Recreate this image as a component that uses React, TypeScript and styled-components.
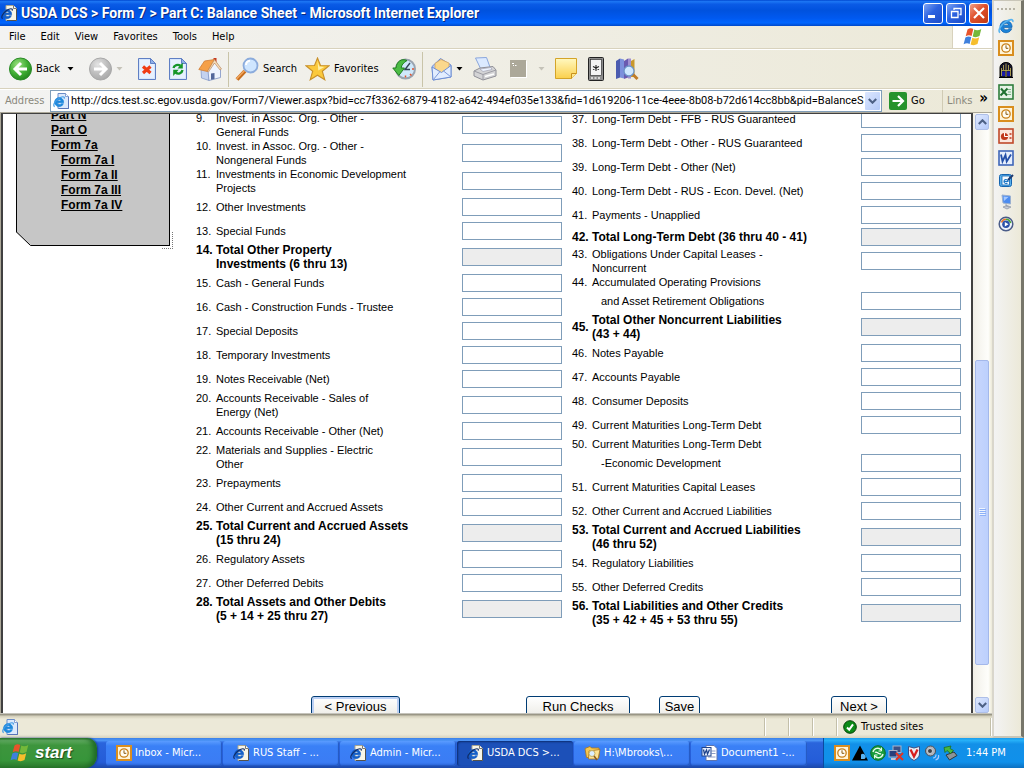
import React from "react";
import styled, { createGlobalStyle, css } from "styled-components";

const UI = `"DejaVu Sans Condensed", "DejaVu Sans", sans-serif`;
const DOC = `"Liberation Sans", Arial, sans-serif`;

const Global = createGlobalStyle`
  *, *::before, *::after { box-sizing: border-box; }
  body { margin: 0; background: #ece9d8; font: 11px/14px ${UI}; color: #000; overflow: hidden; }
  button { border: 0; padding: 0; margin: 0; background: none; font: inherit; color: inherit; }
  input { font: inherit; margin: 0; }
  svg { display: block; flex: none; }
`;

/* ---------- shell ---------- */

const Desktop = styled.div`
  display: flex;
  flex-direction: column;
  height: 100vh;
`;
const Workspace = styled.div`
  flex: 1;
  min-height: 0;
  display: flex;
`;
const Browser = styled.main`
  flex: 1;
  min-width: 0;
  display: flex;
  flex-direction: column;
`;
const TitleBar = styled.header`
  height: 26px;
  flex: none;
  display: flex;
  align-items: center;
  gap: 3px;
  padding: 0 3px 0 1px;
  color: #fff;
  background: linear-gradient(#0047d0 0%, #1c76f4 6%, #0a5be6 16%, #0052de 40%, #0059f0 70%, #0066ff 88%, #0048c8 100%);
`;
const Title = styled.h1`
  flex: 1;
  margin: 0;
  font: bold 14px/18px Roboto, sans-serif;
  white-space: nowrap;
  text-shadow: 1px 1px 0 #0a2a80;
`;
const WinButton = styled.button<{ $close?: boolean }>`
  width: 20px;
  height: 21px;
  border: 1px solid #fff;
  border-radius: 3px;
  display: grid;
  place-items: center;
  background: ${(p) =>
    p.$close
      ? "linear-gradient(135deg, #f0a088, #e0502c 45%, #c03a14)"
      : "linear-gradient(135deg, #7ea4f4, #2c62e0 45%, #1c4cc8)"};
`;

const MenuBar = styled.nav`
  height: 23px;
  flex: none;
  display: flex;
  align-items: stretch;
  padding-left: 1px;
  background: linear-gradient(90deg, #f3f3f2, #ece9d8);
  border-bottom: 1px solid #d8d2bd;
`;
const MenuItem = styled.button`
  padding: 0 7px 0 8px;
`;
const FlagBox = styled.div`
  margin-left: auto;
  width: 40px;
  display: grid;
  place-items: center;
  background: #fff;
  border-left: 1px solid #d8d2bd;
`;

const ToolBar = styled.div`
  height: 40px;
  flex: none;
  display: flex;
  align-items: center;
  gap: 10px;
  padding-left: 8px;
  background: linear-gradient(90deg, #f3f3f2, #ece9d8);
  border-top: 1px solid #fff;
  border-bottom: 1px solid #d8d2bd;
`;
const ToolButton = styled.button<{ $width: number; $end?: boolean }>`
  width: ${(p) => p.$width}px;
  height: 32px;
  display: flex;
  align-items: center;
  justify-content: ${(p) => (p.$end ? "flex-end" : "flex-start")};
  gap: 4px;
  white-space: nowrap;
`;
const ToolSeparator = styled.span`
  width: 1px;
  height: 35px;
  margin: 0 -4px;
  background: #c9c4a9;
`;

const AddressBar = styled.form`
  height: 23px;
  flex: none;
  display: flex;
  align-items: center;
  background: linear-gradient(90deg, #f3f3f2, #ece9d8);
  border-top: 1px solid #fff;
`;
const AddressLabel = styled.label`
  width: 50px;
  padding-left: 5px;
  color: #8a887c;
`;
const UrlBox = styled.div`
  flex: 1;
  min-width: 0;
  height: 22px;
  display: flex;
  align-items: center;
  gap: 1px;
  padding: 0 1px 0 2px;
  background: #fff;
  border: 1px solid #7f9db9;
`;
const UrlInput = styled.input`
  flex: 1;
  min-width: 0;
  border: 0;
  padding: 0;
  background: transparent;
  outline: 0;
  font: 11px/16px Roboto, sans-serif;
`;
const DropButton = styled.button`
  width: 15px;
  height: 18px;
  display: grid;
  place-items: center;
  border-radius: 1px;
  background: linear-gradient(135deg, #dbe6fe, #b4caf8);
`;
const GoButton = styled.button`
  width: 60px;
  padding-left: 7px;
  display: flex;
  align-items: center;
  gap: 4px;
`;
const LinksButton = styled.button`
  width: 50px;
  height: 22px;
  padding: 0 4px;
  display: flex;
  justify-content: space-between;
  align-items: center;
  border-left: 1px solid #d0cbb4;
  color: #8a887c;
`;
const Chevrons = styled.span`
  height: 20px;
  color: #000;
  font: bold 15px/14px ${UI};
`;

/* ---------- page ---------- */

const Frame = styled.section`
  flex: 1;
  min-height: 0;
  display: flex;
  border: solid #aca899;
  border-width: 1px 0 0 1px;
`;
const Viewport = styled.div`
  flex: 1;
  min-width: 0;
  overflow: hidden;
  background: #fff;
  border: solid #404040;
  border-width: 1px 2px 0 2px;
`;
const Scrolled = styled.div`
  margin-top: -7px;
  display: flex;
  align-items: flex-start;
  font: 11px/14px ${DOC};
`;
const NavColumn = styled.aside`
  width: 193px;
  flex: none;
  padding-left: 13px;
`;
const NavShape = styled.nav`
  position: relative;
  width: 154px;
  height: 139px;
  padding: 1px 0 0 34px;
  background: #c6c6c6;
  border: solid #000;
  border-width: 0 1px 1px 1px;
  display: flex;
  flex-direction: column;
  align-items: flex-start;
`;
const NavCorner = styled.svg`
  position: absolute;
  left: -1px;
  bottom: -1px;
`;
const NavGrip = styled.span`
  position: absolute;
  right: -4px;
  bottom: -4px;
  width: 11px;
  height: 17px;
  border: dotted #777;
  border-width: 0 1px 1px 0;
`;
const NavLink = styled.a<{ $sub?: boolean }>`
  margin-left: ${(p) => (p.$sub ? 10 : 0)}px;
  font: bold 12px/15px ${DOC};
  color: #000;
  text-decoration: underline;
`;

const Sheet = styled.form`
  flex: 1;
  min-width: 0;
  padding-right: 10px;
`;
const Columns = styled.div`
  display: grid;
  grid-template-columns: 366fr 389fr;
  gap: 10px;
`;
const AssetColumn = styled.div`
  padding: 4px 0 0;
`;
const DebtColumn = styled.div``;

type RowProps = { $size: "tight" | "single" | "double" | "stacked"; $bold?: boolean };
const rowHeight = { tight: 20, single: 24, double: 28, stacked: 38 };
const Row = styled.div<RowProps>`
  display: flex;
  height: ${(p) => rowHeight[p.$size]}px;
  align-items: ${(p) => (p.$size === "stacked" ? "flex-end" : "center")};
  ${(p) => p.$size === "stacked" && css`padding-bottom: 3px;`}
  ${(p) => p.$bold && css`font-weight: bold; font-size: 12px;`}
`;
const Item = styled.label<{ $middle?: boolean; $stacked?: boolean }>`
  flex: 1;
  min-width: 0;
  display: flex;
  align-items: ${(p) => (p.$middle ? "center" : "flex-start")};
  white-space: nowrap;
  ${(p) => p.$stacked && css`align-self: flex-start;`}
`;
const ItemNumber = styled.span`
  width: 20px;
  flex: none;
`;
const ItemLine = styled.span<{ $indent?: boolean }>`
  display: block;
  ${(p) => p.$indent && css`padding: 5px 0 0 9px;`}
`;
const Amount = styled.input`
  width: 100px;
  height: 18px;
  flex: none;
  border: 1px solid #7f9db9;
  padding: 0 2px;
  background: #fff;
  outline: 0;
  &:read-only { background: #ededed; }
`;

const Actions = styled.div`
  display: flex;
  padding: 69px 0 0 115px;
`;
const ActionButton = styled.button<{ $width: number; $before?: number; $focus?: boolean }>`
  width: ${(p) => p.$width}px;
  height: 22px;
  margin-left: ${(p) => p.$before ?? 0}px;
  border: 1px solid #003c74;
  border-radius: 3px;
  background: linear-gradient(#fff, #ecebe5);
  font: 13px/18px ${DOC};
  ${(p) => p.$focus && css`box-shadow: inset 0 0 0 2px #bcd0f4;`}
`;

const ScrollBar = styled.div`
  width: 19px;
  flex: none;
  display: flex;
  flex-direction: column;
  padding: 1px 3px 0 2px;
  background: linear-gradient(90deg, #f1efe8, #fefefb 80%, #ece9d8);
`;
const ScrollButton = styled.button`
  width: 14px;
  height: 16px;
  display: grid;
  place-items: center;
  border: 1px solid #aebfe8;
  border-radius: 2px;
  background: linear-gradient(135deg, #dde7fe, #b6cbfa);
`;
const ScrollTrack = styled.div`
  flex: 1;
  display: flex;
  flex-direction: column;
`;
const TrackSpace = styled.span<{ $share: number }>`
  flex: ${(p) => p.$share};
`;
const ScrollThumb = styled.span`
  flex: 304;
  width: 14px;
  display: grid;
  place-items: center;
  border: 1px solid #a4b8ea;
  border-radius: 2px;
  background: linear-gradient(90deg, #c8d6fc, #bcd0fd);
`;
const StatusBar = styled.footer`
  height: 25px;
  flex: none;
  display: flex;
  align-items: center;
  padding: 3px 1px 0 0;
  background: linear-gradient(#fff 0, #8b8878 4%, #d6d2be 14%, #ece9d8 24%, #ece9d8 85%, #d6d2be 100%);
`;
const StatusPane = styled.div<{ $width?: number }>`
  flex: ${(p) => (p.$width ? `0 0 ${p.$width}px` : "1")};
  height: 18px;
  display: flex;
  align-items: center;
  gap: 4px;
  padding-left: ${(p) => (p.$width ? 6 : 2)}px;
  border-right: 1px solid #c3bfa9;
  box-shadow: 1px 0 0 #fff;
`;

/* ---------- shortcut strip and task bar ---------- */

const Shortcuts = styled.aside`
  width: 32px;
  flex: none;
  display: flex;
  flex-direction: column;
  align-items: center;
  gap: 6px;
  padding: 7px 3px 0 0;
  border: solid #c9c6b8;
  border-width: 1px 3px 2px 2px;
  border-right-color: #77766a;
  border-left-color: #d9d6cc;
  background: linear-gradient(90deg, #f3f3f3, #ece9d8);
`;
const Grip = styled.span`
  width: 18px;
  height: 2px;
  margin-bottom: 2px;
  border-top: 2px dotted #b5b2a4;
`;
const IconButton = styled.button`
  width: 16px;
  height: 16px;
`;
const TaskBar = styled.footer`
  height: 30px;
  flex: none;
  display: flex;
  color: #fff;
  background: linear-gradient(#3a80e8 0, #4c94f6 8%, #2a64dc 16%, #245cd8 80%, #1c48a8 100%);
`;
const StartButton = styled.button`
  width: 97px;
  margin-right: 9px;
  padding-left: 10px;
  display: flex;
  align-items: center;
  gap: 5px;
  border-radius: 0 10px 12px 0;
  background: linear-gradient(#2f7a30 0, #62ac62 8%, #3d953d 24%, #37953a 75%, #2c7a2c 100%);
  box-shadow: inset -4px 0 5px #1f6a26, 1px 0 2px #173c90;
  font: italic bold 17px/22px ${DOC};
  text-shadow: 1px 1px 1px #1c4a1c;
`;
const Tasks = styled.div`
  flex: 1;
  display: flex;
  align-items: center;
  gap: 1px;
`;
const TaskButton = styled.button<{ $active?: boolean }>`
  width: 116px;
  height: 25px;
  display: flex;
  align-items: center;
  gap: 3px;
  padding-left: 10px;
  border-radius: 3px;
  white-space: nowrap;
  background: ${(p) => (p.$active ? "#1c50b8" : "linear-gradient(#5a9cff, #3a80f6 20%, #3b7cf4 85%, #2c66d8)")};
  box-shadow: ${(p) => (p.$active ? "inset 1px 1px 2px #0c2c70" : "inset -1px -1px 1px #2458c0")};
`;
const Tray = styled.div`
  width: 201px;
  display: flex;
  align-items: center;
  gap: 2px;
  padding-left: 10px;
  background: linear-gradient(#1a9cec 0, #26b0f8 8%, #1290e8 20%, #1090ea 80%, #0c70c0 100%);
  border-left: 1px solid #0a4aa0;
`;
const Clock = styled.time`
  margin-left: 6px;
`;

/* ---------- icons ---------- */

const E_PATH =
  "M14 9.4H5.4a3 3 0 0 0 5.4 1.3h2.9A6 6 0 1 1 14 9.4ZM5.4 7.2h5.4a2.8 2.8 0 0 0-5.4 0Z";
const ORBIT_PATH = "M2.2 14.6C-.6 13.4 2 7.6 7 4.2s8.6-3.4 7.8-.2";

const IeIcon = () => (
  <svg width="16" height="16" viewBox="0 0 16 16">
    <path d={E_PATH} fillRule="evenodd" fill="#1c83d8" stroke="#1264b4" strokeWidth=".8" />
    <path d={ORBIT_PATH} fill="none" stroke="#58b4f0" strokeWidth="1.6" />
  </svg>
);
const PageIeIcon = ({ dark }: { dark?: boolean }) => (
  <svg width="17" height="16" viewBox="0 0 17 16">
    <path d="M5 .5h7.500l3 3v12H5Z" fill={dark ? "#f7f5e8" : "#dce9fb"} stroke={dark ? "#a8a490" : "#6b8cc8"} />
    <path d="M15.500 4v11.500H6" fill="none" stroke={dark ? "#55524a" : "#5874b8"} />
    <path d="M12.500 .5v3h3" fill="#fff" stroke={dark ? "#555" : "#6b8cc8"} strokeWidth=".8" />
    <g transform="translate(0 2.5) scale(.76)">
      <path d={E_PATH} fillRule="evenodd" fill={dark ? "#1560c8" : "#1e88dc"} stroke={dark ? "#1560c8" : "#1e88dc"} strokeWidth=".8" />
      <path d={ORBIT_PATH} fill="none" stroke={dark ? "#102c68" : "#3f9be6"} strokeWidth="1.6" />
    </g>
  </svg>
);
const OutlookIcon = () => (
  <svg width="16" height="16" viewBox="0 0 16 16">
    <rect x="1" y="1" width="14" height="14" fill="#fff4d8" stroke="#d98e1e" strokeWidth="2" />
    <circle cx="8" cy="8" r="4.2" fill="#fffdf4" stroke="#c98018" strokeWidth="1.3" />
    <path d="M8 5.3V8.300h2.300" fill="none" stroke="#8a5a10" />
  </svg>
);
const FlagIcon = ({ size = 20 }: { size?: number }) => (
  <svg width={size} height={size} viewBox="0 0 20 20">
    <path d="M4.500 2.500C6.500 1 8.500 1 10.300 2L8.600 9C6.800 8 4.800 8 2.700 9.300Z" fill="#e8542a" />
    <path d="M11.300 2.600c2 1 4.200 1 7-.5l-1.800 7c-2.600 1.500-4.800 1.400-6.800.4Z" fill="#74b83a" />
    <path d="M2.400 10.500c2-1.300 4-1.300 5.900-.4l-1.700 6.800C4.800 16 2.800 16 .6 17.300Z" fill="#3f80dc" />
    <path d="M9.300 10.700c2 1 4.200 1 6.900-.5l-1.700 6.900c-2.700 1.500-4.900 1.400-6.900.4Z" fill="#f6be2c" />
  </svg>
);
const Caret = ({ faint }: { faint?: boolean }) => (
  <svg width="7" height="4" viewBox="0 0 7 4"><path d="M.5 0h6l-3 3.500Z" fill={faint ? "#c4c2b8" : "#000"} /></svg>
);
const RoundArrow = ({ forward }: { forward?: boolean }) => (
  <svg width="24" height="24" viewBox="0 0 24 24">
    <defs>
      <radialGradient id={forward ? "ballGray" : "ballGreen"} cx=".38" cy=".3" r=".8">
        <stop offset="0" stopColor={forward ? "#e4e4e4" : "#9be080"} />
        <stop offset=".55" stopColor={forward ? "#bcbcbc" : "#3fae33"} />
        <stop offset="1" stopColor={forward ? "#a4a4a4" : "#1d7d1a"} />
      </radialGradient>
    </defs>
    <circle cx="12.500" cy="12" r="11" fill={`url(#${forward ? "ballGray" : "ballGreen"})`} stroke={forward ? "#a8a8a8" : "#2b8a28"} />
    <path d="M19 12H8M13 6 7 12l6 6" fill="none" stroke="#fff" strokeWidth="3"
      transform={forward ? "translate(25 0) scale(-1 1)" : undefined} />
  </svg>
);
const SheetShape = () => (
  <>
    <path d="M1.500 1.500h12l5 5v16h-17Z" fill="#d6e6fc" stroke="#5f7fc4" />
    <path d="M3 3h10v4h4v14H3Z" fill="#eef5ff" opacity=".7" />
    <path d="M13.500 1.500v5h5Z" fill="#8fb0ea" stroke="#5f7fc4" />
  </>
);
const StopIcon = () => (
  <svg width="20" height="24" viewBox="0 0 20 24"><SheetShape /><path d="m6 9.500 7.500 6.500M13.500 9.500 6 16" stroke="#f03c14" strokeWidth="3.2" /></svg>
);
const RefreshIcon = () => (
  <svg width="20" height="24" viewBox="0 0 20 24">
    <SheetShape />
    <path d="M5.500 11c.5-3 4.500-4 7-2.200M14.500 13c-.5 3.500-4.500 4.500-7 2.500" fill="none" stroke="#16962a" strokeWidth="2.3" />
    <path d="M14.800 5.500v6H9.500ZM5.200 19v-6.200h5.500Z" fill="#16962a" />
  </svg>
);
const HomeIcon = () => (
  <svg width="24" height="24" viewBox="0 0 24 24">
    <path d="M15.500 1h3v6h-3Z" fill="#c63a20" />
    <path d="M3 12h8v11.500l-7.500-2.500Z" fill="#c4d2f0" stroke="#7d92c4" strokeWidth=".7" />
    <path d="m10 14 7.500-9.500 5 7v9L11 23.500Z" fill="#eef4ff" stroke="#7d92c4" strokeWidth=".8" />
    <path d="M.8 12.500 6.500 4 16.500 2.500 9.500 14.500Z" fill="#f5a048" stroke="#d07c34" strokeWidth=".8" />
    <path d="m16.500 2.500 7 9.500-1.500 1-5.500-7-6 9-1-.5Z" fill="#f6dcb8" stroke="#b98050" strokeWidth=".6" />
    <path d="M13 16.500 16.500 16v6l-3.500.8Z" fill="#54689c" />
  </svg>
);
const SearchIcon = () => (
  <svg width="24" height="24" viewBox="0 0 24 24">
    <path d="m10 14-8 8.500" stroke="#c76d1c" strokeWidth="4" /><path d="m9.500 13.500-8 8.500" stroke="#f3a860" strokeWidth="1.5" />
    <circle cx="15.500" cy="8.500" r="7" fill="#cfe6ff" stroke="#8cacdc" strokeWidth="1.8" />
    <path d="M11 8a4.500 4.500 0 0 1 4-4.200" stroke="#fff" strokeWidth="2" fill="none" />
  </svg>
);
const StarIcon = () => (
  <svg width="25" height="24" viewBox="0 0 25 24">
    <path d="m12.500 1 3 7.500 8.500.3-6.700 5.400 2.500 8.600-7.300-4.600-7.300 4.600 2.500-8.600L1 8.800l8.500-.3Z" fill="#fbc93c" stroke="#c8902a" strokeWidth="1.1" />
    <path d="m12.500 4 1.800 5.600 5 .4-6 3.500Z" fill="#fff0a8" />
  </svg>
);
const HistoryIcon = () => (
  <svg width="24" height="24" viewBox="0 0 24 24">
    <circle cx="13.500" cy="12" r="9.500" fill="#cfe8fa" stroke="#9aa4b0" strokeWidth="2" />
    <path d="M13.500 18.500v2M20 12h2M18 17l1.500 1.500" stroke="#e0502a" strokeWidth="1.5" />
    <path d="m18 6-5 6.500h5" fill="none" stroke="#345" strokeWidth="1.4" />
    <path d="M15 3.500C9.500 1 4.500 4.500 4 11H.8l6 7.500 5.700-7.500H9.200c.2-3 2-5 5.800-7.500Z" fill="#4cbc44" stroke="#1f7f20" />
  </svg>
);
const MailIcon = () => (
  <svg width="21" height="24" viewBox="0 0 21 24">
    <path d="M1 9.500 9.500 1.500 20 8v12L2 23Z" fill="#b8cdf6" stroke="#6f8fd4" />
    <path d="m4 6.500 6-4 8 3.500v7l-7 4-7-5Z" fill="#fbd88c" stroke="#d9a050" strokeWidth=".7" />
    <path d="m1 10 9.500 5.500L20 8.500V20L2 23Z" fill="#e2edff" stroke="#6f8fd4" />
    <path d="m2 23 7-8.500M20 20l-7.500-6" stroke="#7c98d8" />
  </svg>
);
const PrinterIcon = () => (
  <svg width="24" height="24" viewBox="0 0 24 24">
    <path d="m2.500 1 11-.5 4 11-9 2Z" fill="#dceaff" stroke="#8aa6dc" />
    <path d="m1 14 6-3 13-1.500 3 3.500v6l-13 4-9-4Z" fill="#d4d4d6" stroke="#909098" />
    <path d="m1 14 9 3.500L23 13M10 17.500V23" fill="none" stroke="#9c9ca4" />
    <path d="m7 12 11-1.500 1 2-9 2Z" fill="#eef4ff" stroke="#99a" strokeWidth=".6" />
    <path d="m12 19.500 9-2.500" stroke="#fff" strokeWidth="1.5" />
  </svg>
);
const EditorIcon = () => (
  <svg width="17" height="18" viewBox="0 0 17 18">
    <rect width="16" height="17" fill="#aca899" /><path d="M2 3.500h2M5 5.500h1.500M3 5.500h1M16.500 1v17M1 17.500h15" stroke="#fff" />
  </svg>
);
const NoteIcon = () => (
  <svg width="22" height="24" viewBox="0 0 22 24">
    <defs><linearGradient id="noteFill" x2="0" y2="1"><stop stopColor="#fff8c0" /><stop offset="1" stopColor="#fbd04c" /></linearGradient></defs>
    <path d="M.5 1.500h21v15l-5 5H.5Z" fill="url(#noteFill)" stroke="#d4a428" /><path d="M16.500 21.500v-5h5" fill="#fde890" stroke="#c8901c" />
  </svg>
);
const DeviceIcon = () => (
  <svg width="17" height="24" viewBox="0 0 17 24">
    <rect x=".5" y=".5" width="15" height="23" rx="1" fill="#8c8c8c" stroke="#222" />
    <rect x="2.500" y="2.500" width="11" height="16" fill="#f4f4f4" stroke="#222" strokeWidth=".6" />
    <path d="M8 8v6M5 9.500l6 3M11 9.500l-6 3" stroke="#222" strokeWidth="1.1" /><path d="M3 21h10" stroke="#eee" strokeWidth="1.5" strokeDasharray="2 1.5" />
  </svg>
);
const ResearchIcon = () => (
  <svg width="24" height="24" viewBox="0 0 24 24">
    <path d="m1 4 4-2.500v19L1 22Z" fill="#4c5cb0" /><path d="m5 1.500 4 1v19L5 20.500Z" fill="#7c90dc" />
    <path d="m9 4 4-2.500v19L9 22Z" fill="#6a5ab0" /><path d="M13 1.500h3v20h-3Z" fill="#a090d0" />
    <path d="m16 4 3.500-2v18H16Z" fill="#c8982c" />
    <path d="m17.500 17 5 5" stroke="#c07c28" strokeWidth="3" /><circle cx="14" cy="14" r="5" fill="#cfe8ff" stroke="#6c94c8" strokeWidth="1.3" />
  </svg>
);
const GoIcon = () => (
  <svg width="18" height="18" viewBox="0 0 18 18">
    <rect width="18" height="18" rx="2" fill="#26932c" /><path d="M3.500 9h10M9 4l5 5-5 5" fill="none" stroke="#fff" strokeWidth="2.2" />
  </svg>
);
const Chevron = ({ up }: { up?: boolean }) => (
  <svg width="9" height="6" viewBox="0 0 9 6"><path d={up ? "M.8 5 4.500 1.300 8.200 5" : "m.8 1 3.700 3.700L8.200 1"} fill="none" stroke="#4d6185" strokeWidth="2.1" /></svg>
);
const DoorsIcon = () => (
  <svg width="16" height="16" viewBox="0 0 16 16">
    <path d="M2 15.500V5.500a6 5 0 0 1 12 0v10Z" fill="#14142c" stroke="#000" />
    <path d="M4 9.500h3V14H4ZM9 9.500h3V14H9Z" fill="#1a1aa8" />
    <path d="M8 1.500v13.500M3.500 8.500h9M3.500 14V6M12.500 14V6M5.500 3v5M10.500 3v5" stroke="#c8b858" strokeWidth=".8" /><path d="M1 15.500h14" stroke="#000" />
  </svg>
);
const OfficeIcon = ({ color, tint, mark }: { color: string; tint: string; mark: React.ReactNode }) => (
  <svg width="16" height="16" viewBox="0 0 16 16">
    <rect x="1" y="1" width="14" height="14" fill={tint} stroke={color} strokeWidth="1.6" />{mark}
  </svg>
);
const ExcelIcon = () => (
  <OfficeIcon color="#2f7d3c" tint="#e6f2e6" mark={<><path d="M9.500 5.500h3.500M10 8h3M9.500 10.500h3.500" stroke="#7cb488" strokeWidth="1.2" /><path d="m3 4.500 6 7M9.500 4.500l-7 7" stroke="#1f7030" strokeWidth="2" /></>} />
);
const PowerPointIcon = () => (
  <OfficeIcon color="#c0492a" tint="#fbe6dc" mark={<><circle cx="6.500" cy="8.500" r="3.600" fill="#c0391c" /><path d="M6.500 8.500V5M6.500 8.500h3.500" stroke="#fff" /><path d="M11.500 6h2M11.500 10h2" stroke="#c0391c" strokeWidth="1.5" /></>} />
);
const WordIcon = () => (
  <OfficeIcon color="#3f66b8" tint="#e6eefc" mark={<path d="m3 4.500 1.500 7L7.500 5l1.200 6.500L13 4.500" fill="none" stroke="#2450a8" strokeWidth="1.8" />} />
);
const ComposeIcon = () => (
  <svg width="16" height="16" viewBox="0 0 16 16">
    <rect x="1.500" y="2.500" width="12" height="12" rx="2" fill="#58b0ec" stroke="#1464b0" />
    <rect x="4" y="4" width="7.500" height="9" fill="#f4faff" stroke="#1464b0" strokeWidth=".8" />
    <path d="M6 9.500h4a2 2 0 1 0-.6 1.500" fill="none" stroke="#1c78c8" strokeWidth="1.1" /><path d="m10 8 5-5" stroke="#203c70" strokeWidth="2" />
  </svg>
);
const ComputerIcon = () => (
  <svg width="16" height="16" viewBox="0 0 16 16">
    <path d="m4 1 8.500 1v8L5 9Z" fill="#4c8cf0" stroke="#9ab0d0" /><path d="m5.500 2.500 5 .5-4.500 4Z" fill="#a4c8ff" />
    <path d="M8 10v2l3 1M5 13l4-1.500 4 1.500-4 2Z" fill="#c8ccd8" stroke="#8890a0" strokeWidth=".7" />
  </svg>
);
const MediaIcon = () => (
  <svg width="16" height="16" viewBox="0 0 16 16">
    <circle cx="8" cy="8" r="6.800" fill="#f0f4fb" stroke="#4a5c88" strokeWidth="1.5" />
    <path d="M3.500 6.500A4.800 4.800 0 0 1 8 3.200" stroke="#e8782c" strokeWidth="1.6" fill="none" />
    <path d="M8 3.200a4.800 4.800 0 0 1 4.600 4" stroke="#4ca838" strokeWidth="1.6" fill="none" />
    <circle cx="8" cy="8.300" r="3.800" fill="#2a50a8" /><path d="m6.800 6 3.700 2.300-3.700 2.300Z" fill="#fff" />
  </svg>
);
const TrustedIcon = () => (
  <svg width="14" height="14" viewBox="0 0 14 14">
    <circle cx="7" cy="7" r="6.300" fill="#0c8a18" stroke="#044008" /><path d="m4 7.500 2.200 2.200L10 4.300" fill="none" stroke="#fff" strokeWidth="2" />
  </svg>
);
const FolderIcon = () => (
  <svg width="17" height="16" viewBox="0 0 17 16">
    <path d="M1 3.500 6 1.500l1.500 1.500H15v9.500H2.500Z" fill="#f6c850" stroke="#a8741c" strokeWidth=".8" /><path d="m5 6 11-1.500-2 9.500H4.500Z" fill="#fde394" stroke="#a8741c" strokeWidth=".8" />
    <circle cx="8" cy="8.500" r="3" fill="#dceeff" stroke="#c8b060" /><path d="m10 11 3 4" stroke="#8a5a20" strokeWidth="1.5" />
  </svg>
);
const DocumentIcon = () => (
  <svg width="17" height="16" viewBox="0 0 17 16">
    <path d="M5 .5h8l3 3v12H5Z" fill="#fff" stroke="#5c74b0" /><path d="M10.500 6h4M10.500 8.500h4M7 12h7.500" stroke="#8c9cc8" />
    <rect x="1" y="2.500" width="9" height="8.500" fill="#e8f0ff" stroke="#20448c" />
    <path d="m2.500 4.500 1 4.500 2-4 1 4 2-4.500" fill="none" stroke="#20448c" strokeWidth="1.3" />
  </svg>
);
const TriangleIcon = () => (
  <svg width="16" height="16" viewBox="0 0 16 16"><path d="M8 .5 16 15.500H0Z" fill="#000" /><path d="M9 9.500a2.500 2.500 0 0 1 3.500 4.500H9Z" fill="#58b4f4" /></svg>
);
const SyncIcon = () => (
  <svg width="16" height="16" viewBox="0 0 16 16">
    <circle cx="8" cy="8" r="7.300" fill="#189c3c" stroke="#0c6c28" />
    <path d="M3 7c1-4 6-5 8-2M13 9c-1 4-6 5-8 2" fill="none" stroke="#e8fbe8" strokeWidth="1.4" />
    <path d="M5 7.500c2-2 4 3 6 1" fill="none" stroke="#fff" strokeWidth="1.4" />
    <path d="M11.500 2.500V6H8.500M4.500 13.500V10h3" fill="none" stroke="#e8fbe8" />
  </svg>
);
const OfflineIcon = () => (
  <svg width="16" height="16" viewBox="0 0 16 16">
    <rect x="5" y="1" width="8" height="6.500" fill="#3c5084" stroke="#a8b4cc" /><rect x="1" y="5.500" width="8" height="6.500" fill="#28407c" stroke="#a8b4cc" />
    <path d="M3 14h5" stroke="#c0c8d8" strokeWidth="2" /><path d="m8 8 7 7M15 8l-7 7" stroke="#e03424" strokeWidth="2.2" />
  </svg>
);
const ShieldIcon = () => (
  <svg width="16" height="16" viewBox="0 0 16 16">
    <path d="M2.500 1.500 8 3l5.500-1.500V9c0 3-2.500 5-5.500 6.500C5 14 2.500 12 2.500 9Z" fill="#e8ecf4" stroke="#3c5084" />
    <path d="m4.500 4.500 3.500 7 3.500-7" fill="none" stroke="#d81c1c" strokeWidth="2.3" />
  </svg>
);
const SpeakerIcon = () => (
  <svg width="16" height="16" viewBox="0 0 16 16">
    <circle cx="6.500" cy="6" r="5" fill="#b0b4bc" stroke="#4c5058" /><circle cx="6" cy="6" r="2.500" fill="#3c4048" stroke="#e0e4e8" strokeWidth=".8" />
    <path d="M9 13c2 0 3-1.500 3-3.500M11.500 15c2-.5 3.500-2.500 3-5" fill="none" stroke="#a8c8ff" strokeWidth="1.2" />
  </svg>
);
const EjectIcon = () => (
  <svg width="16" height="16" viewBox="0 0 16 16">
    <path d="m4 10 8-3 3 3.500-7.500 4.500Z" fill="#8c9498" stroke="#30383c" />
    <path d="M2 2.500 9 1 8 3.500l3.500 2-3 3-3.500-3L3 7.500Z" fill="#48b840" stroke="#1c6c20" strokeWidth=".8" />
  </svg>
);

/* ---------- data ---------- */

type Entry = {
  n: number;
  lines: string[];
  total?: boolean;
  tight?: boolean;
  stacked?: boolean;
  middle?: boolean;
};

const assets: Entry[] = [
  { n: 9, lines: ["Invest. in Assoc. Org. - Other -", "General Funds"] },
  { n: 10, lines: ["Invest. in Assoc. Org. - Other -", "Nongeneral Funds"] },
  { n: 11, lines: ["Investments in Economic Development", "Projects"] },
  { n: 12, lines: ["Other Investments"] },
  { n: 13, lines: ["Special Funds"] },
  { n: 14, lines: ["Total Other Property", "Investments (6 thru 13)"], total: true },
  { n: 15, lines: ["Cash - General Funds"] },
  { n: 16, lines: ["Cash - Construction Funds - Trustee"] },
  { n: 17, lines: ["Special Deposits"] },
  { n: 18, lines: ["Temporary Investments"] },
  { n: 19, lines: ["Notes Receivable (Net)"] },
  { n: 20, lines: ["Accounts Receivable - Sales of", "Energy (Net)"] },
  { n: 21, lines: ["Accounts Receivable - Other (Net)"] },
  { n: 22, lines: ["Materials and Supplies - Electric", "Other"] },
  { n: 23, lines: ["Prepayments"] },
  { n: 24, lines: ["Other Current and Accrued Assets"] },
  { n: 25, lines: ["Total Current and Accrued Assets", "(15 thru 24)"], total: true },
  { n: 26, lines: ["Regulatory Assets"] },
  { n: 27, lines: ["Other Deferred Debits"] },
  { n: 28, lines: ["Total Assets and Other Debits", "(5 + 14 + 25 thru 27)"], total: true },
];

const debts: Entry[] = [
  { n: 37, lines: ["Long-Term Debt - FFB - RUS Guaranteed"] },
  { n: 38, lines: ["Long-Term Debt - Other - RUS Guaranteed"] },
  { n: 39, lines: ["Long-Term Debt - Other (Net)"] },
  { n: 40, lines: ["Long-Term Debt - RUS - Econ. Devel. (Net)"] },
  { n: 41, lines: ["Payments - Unapplied"] },
  { n: 42, lines: ["Total Long-Term Debt (36 thru 40 - 41)"], total: true, tight: true },
  { n: 43, lines: ["Obligations Under Capital Leases -", "Noncurrent"] },
  { n: 44, lines: ["Accumulated Operating Provisions", "and Asset Retirement Obligations"], stacked: true },
  { n: 45, lines: ["Total Other Noncurrent Liabilities", "(43 + 44)"], total: true, middle: true },
  { n: 46, lines: ["Notes Payable"] },
  { n: 47, lines: ["Accounts Payable"] },
  { n: 48, lines: ["Consumer Deposits"] },
  { n: 49, lines: ["Current Maturities Long-Term Debt"] },
  { n: 50, lines: ["Current Maturities Long-Term Debt", "-Economic Development"], stacked: true },
  { n: 51, lines: ["Current Maturities Capital Leases"] },
  { n: 52, lines: ["Other Current and Accrued Liabilities"] },
  { n: 53, lines: ["Total Current and Accrued Liabilities", "(46 thru 52)"], total: true },
  { n: 54, lines: ["Regulatory Liabilities"] },
  { n: 55, lines: ["Other Deferred Credits"] },
  { n: 56, lines: ["Total Liabilities and Other Credits", "(35 + 42 + 45 + 53 thru 55)"], total: true },
];

const links: [string, boolean][] = [
  ["Part N", false],
  ["Part O", false],
  ["Form 7a", false],
  ["Form 7a I", true],
  ["Form 7a II", true],
  ["Form 7a III", true],
  ["Form 7a IV", true],
];

const shortcuts: [string, React.FC][] = [
  ["Internet Explorer", IeIcon],
  ["Outlook", OutlookIcon],
  ["Doors", DoorsIcon],
  ["Excel", ExcelIcon],
  ["Outlook Calendar", OutlookIcon],
  ["PowerPoint", PowerPointIcon],
  ["Word", WordIcon],
  ["Compose", ComposeIcon],
  ["My Computer", ComputerIcon],
  ["Media Player", MediaIcon],
];

const tasks: { text: string; icon: React.ReactNode; active?: boolean }[] = [
  { text: "Inbox - Micr...", icon: <OutlookIcon /> },
  { text: "RUS Staff - ...", icon: <PageIeIcon dark /> },
  { text: "Admin - Micr...", icon: <PageIeIcon dark /> },
  { text: "USDA DCS >...", icon: <PageIeIcon dark />, active: true },
  { text: "H:\\Mbrooks\\...", icon: <FolderIcon /> },
  { text: "Document1 -...", icon: <DocumentIcon /> },
];

const url =
  "http://dcs.test.sc.egov.usda.gov/Form7/Viewer.aspx?bid=cc7f3362-6879-4182-a642-494ef035e133&fid=1d619206-11ce-4eee-8b08-b72d614cc8bb&pid=BalanceS";

const EntryRow = ({ entry }: { entry: Entry }) => {
  const size = entry.stacked ? "stacked" : entry.tight ? "tight" : entry.lines.length > 1 ? "double" : "single";
  const id = `item-${entry.n}`;
  return (
    <Row $size={size} $bold={entry.total}>
      <Item htmlFor={id} $middle={entry.middle} $stacked={entry.stacked}>
        <ItemNumber>{entry.n}.</ItemNumber>
        <span>
          {entry.lines.map((line, i) => (
            <ItemLine key={line} $indent={entry.stacked && i > 0}>{line}</ItemLine>
          ))}
        </span>
      </Item>
      <Amount id={id} type="text" readOnly={entry.total} />
    </Row>
  );
};

export default function App() {
  return (
    <Desktop>
      <Global />
      <Workspace>
        <Browser>
          <TitleBar>
            <PageIeIcon dark />
            <Title>USDA DCS &gt; Form 7 &gt; Part C: Balance Sheet - Microsoft Internet Explorer</Title>
            <WinButton aria-label="Minimize">
              <svg width="12" height="12" viewBox="0 0 12 12"><path d="M1 9.500h7" stroke="#fff" strokeWidth="3" /></svg>
            </WinButton>
            <WinButton aria-label="Restore">
              <svg width="12" height="12" viewBox="0 0 12 12">
                <path d="M4 3V1.500h7v6H9.500M1.500 4.500h6.500v6H1.500Z" fill="none" stroke="#fff" strokeWidth="1.3" />
              </svg>
            </WinButton>
            <WinButton aria-label="Close" $close>
              <svg width="12" height="12" viewBox="0 0 12 12"><path d="m1 1 10 10M11 1 1 11" stroke="#fff" strokeWidth="2.2" /></svg>
            </WinButton>
          </TitleBar>

          <MenuBar>
            {["File", "Edit", "View", "Favorites", "Tools", "Help"].map((m) => (
              <MenuItem key={m}>{m}</MenuItem>
            ))}
            <FlagBox><FlagIcon /></FlagBox>
          </MenuBar>

          <ToolBar>
            <ToolButton $width={70}><RoundArrow />Back&nbsp;<Caret /></ToolButton>
            <ToolButton $width={39} aria-label="Forward"><RoundArrow forward /><Caret faint /></ToolButton>
            <ToolButton $width={21} aria-label="Stop"><StopIcon /></ToolButton>
            <ToolButton $width={20} aria-label="Refresh"><RefreshIcon /></ToolButton>
            <ToolButton $width={24} aria-label="Home"><HomeIcon /></ToolButton>
            <ToolSeparator />
            <ToolButton $width={60}><SearchIcon />Search</ToolButton>
            <ToolButton $width={75}><StarIcon />Favorites</ToolButton>
            <ToolButton $width={26} $end aria-label="History"><HistoryIcon /></ToolButton>
            <ToolSeparator />
            <ToolButton $width={34} $end aria-label="Mail"><MailIcon /><Caret /></ToolButton>
            <ToolButton $width={24} aria-label="Print"><PrinterIcon /></ToolButton>
            <ToolButton $width={38} $end aria-label="Edit page"><EditorIcon />&nbsp;<Caret faint /></ToolButton>
            <ToolButton $width={22} aria-label="Notes"><NoteIcon /></ToolButton>
            <ToolButton $width={18} $end aria-label="Device"><DeviceIcon /></ToolButton>
            <ToolButton $width={24} aria-label="Research"><ResearchIcon /></ToolButton>
          </ToolBar>

          <AddressBar>
            <AddressLabel htmlFor="address">Address</AddressLabel>
            <UrlBox>
              <PageIeIcon />
              <UrlInput id="address" type="text" defaultValue={url} />
              <DropButton type="button" aria-label="Recent addresses"><Chevron /></DropButton>
            </UrlBox>
            <GoButton type="button"><GoIcon />Go</GoButton>
            <LinksButton type="button">Links<Chevrons>»</Chevrons></LinksButton>
          </AddressBar>

          <Frame>
            <Viewport>
              <Scrolled>
                <NavColumn>
                  <NavShape>
                    {links.map(([text, sub]) => (
                      <NavLink key={text} href="#" $sub={sub}>{text}</NavLink>
                    ))}
                    <NavCorner width="15" height="14" viewBox="0 0 15 14">
                      <path d="M0 0v14h15Z" fill="#fff" /><path d="m.5 0 14 13.500" stroke="#000" />
                    </NavCorner>
                    <NavGrip />
                  </NavShape>
                </NavColumn>
                <Sheet>
                  <Columns>
                    <AssetColumn>{assets.map((e) => <EntryRow key={e.n} entry={e} />)}</AssetColumn>
                    <DebtColumn>{debts.map((e) => <EntryRow key={e.n} entry={e} />)}</DebtColumn>
                  </Columns>
                  <Actions>
                    <ActionButton type="button" $width={89} $focus>&lt; Previous</ActionButton>
                    <ActionButton type="button" $width={104} $before={126}>Run Checks</ActionButton>
                    <ActionButton type="button" $width={41} $before={29}>Save</ActionButton>
                    <ActionButton type="button" $width={56} $before={131}>Next &gt;</ActionButton>
                  </Actions>
                </Sheet>
              </Scrolled>
            </Viewport>
            <ScrollBar>
              <ScrollButton aria-label="Scroll up"><Chevron up /></ScrollButton>
              <ScrollTrack>
                <TrackSpace $share={230} />
                <ScrollThumb>
                  <svg width="7" height="8" viewBox="0 0 7 8"><path d="M0 .5h6M0 2.500h6M0 4.500h6M0 6.500h6" stroke="#eef4fe" /><path d="M1 1.500h6M1 3.500h6M1 5.500h6M1 7.500h6" stroke="#8cb0f8" /></svg>
                </ScrollThumb>
                <TrackSpace $share={32} />
              </ScrollTrack>
              <ScrollButton aria-label="Scroll down"><Chevron /></ScrollButton>
            </ScrollBar>
          </Frame>

          <StatusBar>
            <StatusPane><PageIeIcon /></StatusPane>
            <StatusPane $width={24} />
            <StatusPane $width={24} />
            <StatusPane $width={24} />
            <StatusPane $width={154}><TrustedIcon />Trusted sites</StatusPane>
          </StatusBar>
        </Browser>

        <Shortcuts>
          <Grip />
          {shortcuts.map(([name, Icon]) => (
            <IconButton key={name} aria-label={name}><Icon /></IconButton>
          ))}
        </Shortcuts>
      </Workspace>

      <TaskBar>
        <StartButton><FlagIcon />start</StartButton>
        <Tasks>
          {tasks.map((t) => (
            <TaskButton key={t.text} $active={t.active}>{t.icon}{t.text}</TaskButton>
          ))}
        </Tasks>
        <Tray>
          <OutlookIcon />
          <TriangleIcon />
          <SyncIcon />
          <OfflineIcon />
          <ShieldIcon />
          <SpeakerIcon />
          <EjectIcon />
          <Clock>1:44 PM</Clock>
        </Tray>
      </TaskBar>
    </Desktop>
  );
}
